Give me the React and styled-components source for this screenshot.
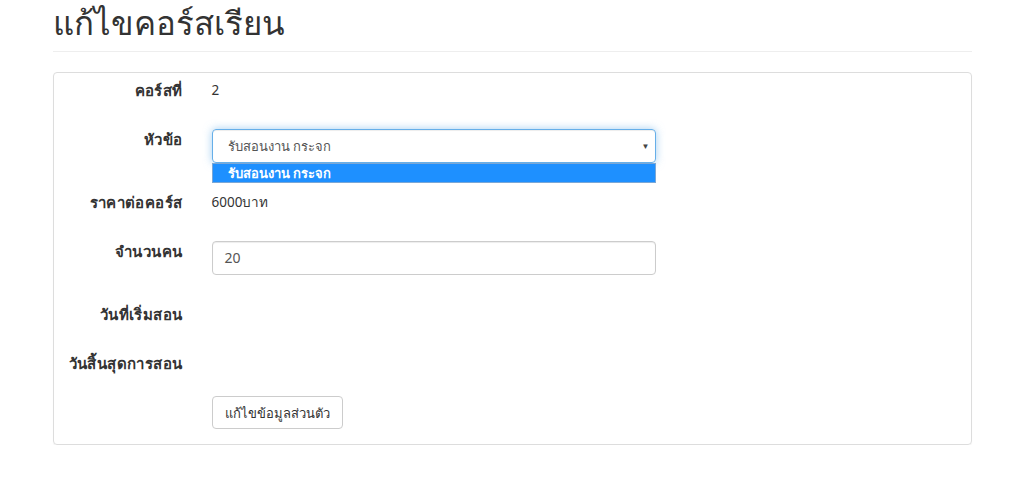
import React from 'react';
import styled, { createGlobalStyle } from 'styled-components';

const GlobalStyle = createGlobalStyle`
  body {
    margin: 0;
    background: #fff;
    font-family: "Noto Sans", "Liberation Sans", sans-serif;
    font-size: 14px;
    line-height: 20px;
    color: #333;
  }
  * { box-sizing: border-box; }
`;

const Container = styled.div`
  width: 919px;
  margin: 0 auto;
`;

const PageHeader = styled.div`
  padding-bottom: 9px;
  margin: 0 0 20px;
  border-bottom: 1px solid #eee;
`;

const Title = styled.h1`
  margin: 2px 0 0;
  padding-top: 2px;
  font-size: 33px;
  line-height: 38px;
  font-weight: 500;
  color: #333;
`;

const Panel = styled.div`
  border: 1px solid #ddd;
  border-radius: 4px;
  box-shadow: 0 1px 1px rgba(0, 0, 0, 0.05);
  padding: 7px 15px 15px;
`;

const Form = styled.form`
  display: flex;
  flex-direction: column;
  gap: 29px;
`;

const Row = styled.div`
  display: grid;
  grid-template-columns: 114px 444px;
  column-gap: 29px;
  align-items: start;
  margin-top: ${({ $tight }) => ($tight ? '-6px' : '0')};
`;

const Label = styled.label`
  text-align: right;
  font-weight: 700;
  font-size: 15px;
  letter-spacing: 0.4px;
  line-height: 20px;
  white-space: nowrap;
`;

const Static = styled.div`
  line-height: 20px;
  font-size: 13.5px;
`;

const SelectWrap = styled.div`
  position: relative;
`;

const SelectBox = styled.div`
  height: 34px;
  border: 1px solid #66afe9;
  border-radius: 4px;
  box-shadow: inset 0 1px 1px rgba(0, 0, 0, 0.075), 0 0 8px rgba(102, 175, 233, 0.6);
  padding: 6px 5px 6px 15px;
  display: flex;
  align-items: center;
  justify-content: space-between;
  color: #555;
  font-size: 13px;
`;

const Caret = styled.span`
  font-size: 8px;
  color: #444;
`;

const Listbox = styled.div`
  position: absolute;
  left: 0;
  right: 0;
  top: 34px;
  height: 20px;
  background: #1e90ff;
  border: 1px solid #7aa7d6;
  color: #fff;
  font-weight: 700;
  font-size: 13px;
  line-height: 18px;
  padding-left: 15px;
`;

const Input = styled.div`
  height: 34px;
  border: 1px solid #ccc;
  border-radius: 4px;
  box-shadow: inset 0 1px 1px rgba(0, 0, 0, 0.075);
  padding: 6px 12px;
  color: #555;
  line-height: 20px;
`;

const Button = styled.button`
  justify-self: start;
  height: 33px;
  padding: 6px 12px;
  border: 1px solid #ccc;
  border-radius: 4px;
  background: #fff;
  color: #333;
  font-family: inherit;
  font-size: 13px;
  line-height: 20px;
`;

export default function App() {
  return (
    <>
      <GlobalStyle />
      <Container>
        <PageHeader>
          <Title>แก้ไขคอร์สเรียน</Title>
        </PageHeader>
        <Panel>
          <Form>
            <Row>
              <Label>คอร์สที่</Label>
              <Static>2</Static>
            </Row>
            <Row>
              <Label>หัวข้อ</Label>
              <SelectWrap>
                <SelectBox>
                  <span>รับสอนงาน กระจก</span>
                  <Caret>▼</Caret>
                </SelectBox>
                <Listbox>รับสอนงาน กระจก</Listbox>
              </SelectWrap>
            </Row>
            <Row>
              <Label>ราคาต่อคอร์ส</Label>
              <Static>6000บาท</Static>
            </Row>
            <Row>
              <Label>จำนวนคน</Label>
              <Input>20</Input>
            </Row>
            <Row>
              <Label>วันที่เริ่มสอน</Label>
              <Static />
            </Row>
            <Row>
              <Label>วันสิ้นสุดการสอน</Label>
              <Static />
            </Row>
            <Row $tight>
              <span />
              <Button type="button">แก้ไขข้อมูลส่วนตัว</Button>
            </Row>
          </Form>
        </Panel>
      </Container>
    </>
  );
}
